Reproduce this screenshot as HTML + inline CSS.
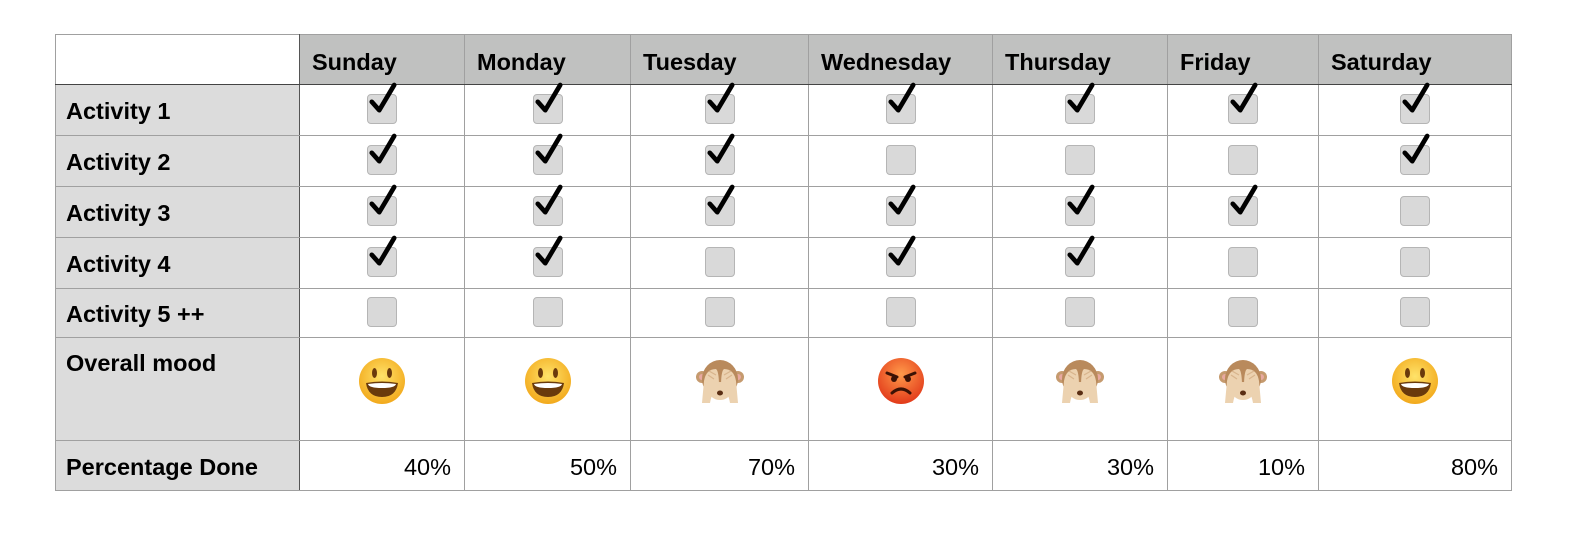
<!DOCTYPE html>
<html><head><meta charset="utf-8"><style>
body{margin:0;background:#fff;width:1588px;height:556px;overflow:hidden;font-family:"Liberation Sans",Arial,sans-serif}
table{position:absolute;left:55px;top:34px;border-collapse:collapse;table-layout:fixed;width:1456px}
td{border:1px solid #a0a0a0;padding:0;font-size:23.5px;color:#000;text-align:center;vertical-align:middle;box-sizing:border-box}
td.l{background:#dcdcdc;font-weight:bold;text-align:left;padding-left:10px;padding-top:3px;border-right:1px solid #555}
tr.h td{background:#c0c1c0;font-weight:bold;text-align:left;padding-left:12px;border-bottom:1px solid #444;padding-top:5px}
tr.h td.e{background:#fff;border-right:1px solid #555}
td.m{vertical-align:top;padding-top:12px}
td.p{text-align:right;padding-right:13px;padding-top:4px}
.b{display:inline-block;width:28px;height:28px;border:1px solid #b5b5b5;border-radius:4px;background:#d9d9d9;position:relative;vertical-align:middle;margin-top:-4px}
.b svg{position:absolute;left:1px;top:-13px}
</style></head><body>
<svg width="0" height="0" style="position:absolute"><defs>
<symbol id="c" viewBox="0 0 30 36"><path d="M3 21 L11 30 L27 3" fill="none" stroke="#000" stroke-width="5" stroke-linecap="round" stroke-linejoin="round"/></symbol>
<symbol id="s" viewBox="0 0 48 48"><defs><radialGradient id="g" cx="50%" cy="40%" r="60%"><stop offset="0" stop-color="#ffe36a"/><stop offset="1" stop-color="#f2a91c"/></radialGradient></defs><circle cx="24" cy="24" r="23" fill="url(#g)"/><ellipse cx="16.5" cy="16" rx="2.5" ry="5" fill="#6a3a0c"/><ellipse cx="31.5" cy="16" rx="2.5" ry="5" fill="#6a3a0c"/><path d="M8 26 Q24 23 40 26 Q38 40 24 40 Q10 40 8 26Z" fill="#6a3a0c"/><path d="M10 27 Q24 25 38 27 Q37 31 24 31 Q11 31 10 27Z" fill="#fff"/></symbol>
<symbol id="a" viewBox="0 0 48 48"><defs><radialGradient id="r" cx="50%" cy="35%" r="65%"><stop offset="0" stop-color="#ff9a4a"/><stop offset="1" stop-color="#e23a1a"/></radialGradient></defs><circle cx="24" cy="24" r="23" fill="url(#r)"/><path d="M10 16 L20 20 M38 16 L28 20" stroke="#3b1205" stroke-width="3" stroke-linecap="round"/><circle cx="17" cy="22" r="3" fill="#3b1205"/><circle cx="31" cy="22" r="3" fill="#3b1205"/><path d="M15 36 Q24 28 33 36" fill="none" stroke="#3b1205" stroke-width="3" stroke-linecap="round"/></symbol>
<symbol id="k" viewBox="0 0 48 48"><circle cx="6" cy="20" r="6" fill="#c59a6e"/><circle cx="42" cy="20" r="6" fill="#c59a6e"/><circle cx="6" cy="20" r="3" fill="#e8a9a0"/><circle cx="42" cy="20" r="3" fill="#e8a9a0"/><ellipse cx="24" cy="22" rx="18" ry="19" fill="#b98a5c"/><ellipse cx="24" cy="34" rx="11" ry="9" fill="#ecd2b0"/><ellipse cx="24" cy="36" rx="3" ry="2.5" fill="#5a2e14"/><path d="M6 46 L8 24 Q10 12 20 12 Q23 14 23 30 Q16 34 14 46Z" fill="#ecd2b0"/><path d="M42 46 L40 24 Q38 12 28 12 Q25 14 25 30 Q32 34 34 46Z" fill="#ecd2b0"/><path d="M12 18 L18 22 M13 14 L20 18 M36 18 L30 22 M35 14 L28 18" stroke="#d8b48c" stroke-width="1.2"/></symbol>
</defs></svg>
<table>
<tr class="h" style="height:50px"><td class="e" style="width:244px"></td><td style="width:165px">Sunday</td><td style="width:166px">Monday</td><td style="width:178px">Tuesday</td><td style="width:184px">Wednesday</td><td style="width:175px">Thursday</td><td style="width:151px">Friday</td><td style="width:193px">Saturday</td></tr>
<tr style="height:51px"><td class="l">Activity 1</td>
<td><span class="b"><svg width="28" height="34"><use href="#c"/></svg></span></td>
<td><span class="b"><svg width="28" height="34"><use href="#c"/></svg></span></td>
<td><span class="b"><svg width="28" height="34"><use href="#c"/></svg></span></td>
<td><span class="b"><svg width="28" height="34"><use href="#c"/></svg></span></td>
<td><span class="b"><svg width="28" height="34"><use href="#c"/></svg></span></td>
<td><span class="b"><svg width="28" height="34"><use href="#c"/></svg></span></td>
<td><span class="b"><svg width="28" height="34"><use href="#c"/></svg></span></td></tr>
<tr style="height:51px"><td class="l">Activity 2</td>
<td><span class="b"><svg width="28" height="34"><use href="#c"/></svg></span></td>
<td><span class="b"><svg width="28" height="34"><use href="#c"/></svg></span></td>
<td><span class="b"><svg width="28" height="34"><use href="#c"/></svg></span></td>
<td><span class="b"></span></td>
<td><span class="b"></span></td>
<td><span class="b"></span></td>
<td><span class="b"><svg width="28" height="34"><use href="#c"/></svg></span></td></tr>
<tr style="height:51px"><td class="l">Activity 3</td>
<td><span class="b"><svg width="28" height="34"><use href="#c"/></svg></span></td>
<td><span class="b"><svg width="28" height="34"><use href="#c"/></svg></span></td>
<td><span class="b"><svg width="28" height="34"><use href="#c"/></svg></span></td>
<td><span class="b"><svg width="28" height="34"><use href="#c"/></svg></span></td>
<td><span class="b"><svg width="28" height="34"><use href="#c"/></svg></span></td>
<td><span class="b"><svg width="28" height="34"><use href="#c"/></svg></span></td>
<td><span class="b"></span></td></tr>
<tr style="height:51px"><td class="l">Activity 4</td>
<td><span class="b"><svg width="28" height="34"><use href="#c"/></svg></span></td>
<td><span class="b"><svg width="28" height="34"><use href="#c"/></svg></span></td>
<td><span class="b"></span></td>
<td><span class="b"><svg width="28" height="34"><use href="#c"/></svg></span></td>
<td><span class="b"><svg width="28" height="34"><use href="#c"/></svg></span></td>
<td><span class="b"></span></td>
<td><span class="b"></span></td></tr>
<tr style="height:49px"><td class="l">Activity 5 ++</td>
<td><span class="b"></span></td><td><span class="b"></span></td><td><span class="b"></span></td><td><span class="b"></span></td><td><span class="b"></span></td><td><span class="b"></span></td><td><span class="b"></span></td></tr>
<tr style="height:103px"><td class="l" style="vertical-align:top;padding-top:12px">Overall mood</td>
<td class="m"><svg width="48" height="48" style="margin-top:7px"><use href="#s"/></svg></td>
<td class="m"><svg width="48" height="48" style="margin-top:7px"><use href="#s"/></svg></td>
<td class="m"><svg width="48" height="48" style="margin-top:7px"><use href="#k"/></svg></td>
<td class="m"><svg width="48" height="48" style="margin-top:7px"><use href="#a"/></svg></td>
<td class="m"><svg width="48" height="48" style="margin-top:7px"><use href="#k"/></svg></td>
<td class="m"><svg width="48" height="48" style="margin-top:7px"><use href="#k"/></svg></td>
<td class="m"><svg width="48" height="48" style="margin-top:7px"><use href="#s"/></svg></td></tr>
<tr style="height:50px"><td class="l">Percentage Done</td>
<td class="p">40%</td><td class="p">50%</td><td class="p">70%</td><td class="p">30%</td><td class="p">30%</td><td class="p">10%</td><td class="p">80%</td></tr>
</table>
</body></html>
